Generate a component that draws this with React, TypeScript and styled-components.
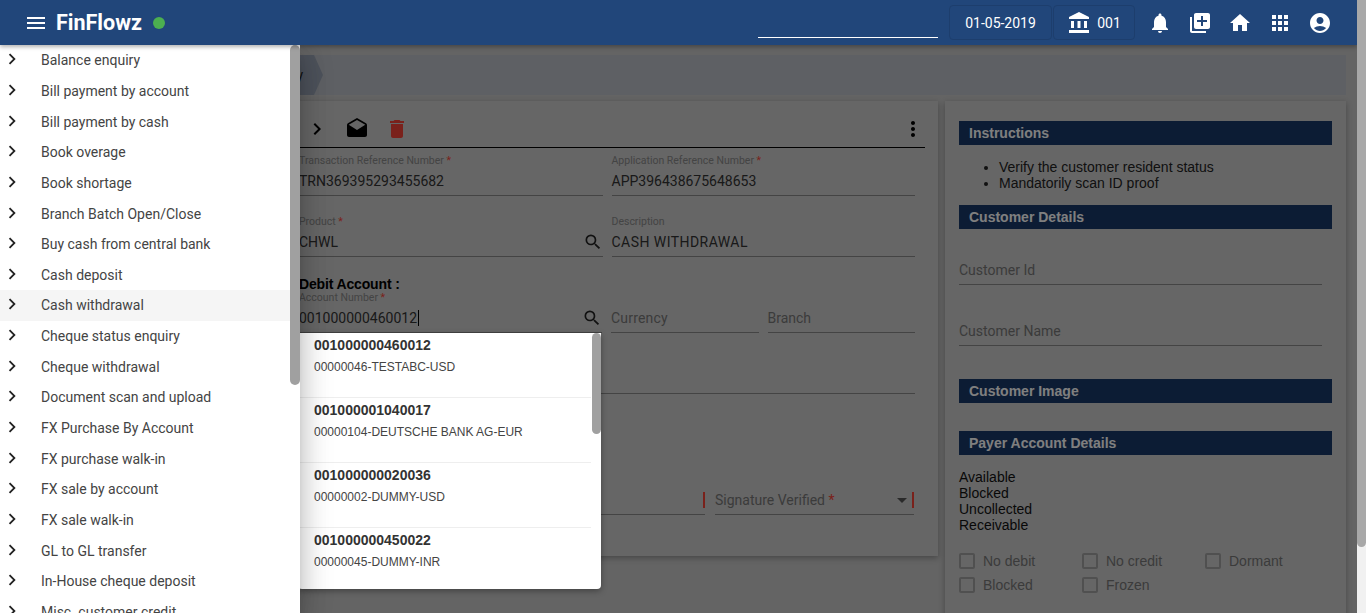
import React from 'react';
import styled, { createGlobalStyle } from 'styled-components';
import {
  MdAccountBalance,
  MdAccountCircle,
  MdApps,
  MdArrowDropDown,
  MdChevronLeft,
  MdChevronRight,
  MdDelete,
  MdDrafts,
  MdHome,
  MdLibraryAdd,
  MdMenu,
  MdMoreVert,
  MdNotifications,
  MdSearch,
} from 'react-icons/md';

const GlobalStyle = createGlobalStyle`
  html, body {
    margin: 0;
    height: 100%;
    overflow: hidden;
    background: #fff;
    font-family: "Liberation Sans", Arial, sans-serif;
  }
  * { box-sizing: border-box; }
`;

const Shell = styled.div`
  display: flex;
  width: 1366px;
  height: 613px;
  overflow: hidden;
`;

const Page = styled.div`
  position: relative;
  width: 1357px;
  height: 613px;
  overflow: hidden;
  background: #c8c8c8;
`;

const ScrollTrack = styled.div`
  width: 9px;
  background: #f1f1f1;
`;

const ScrollThumb = styled.div`
  height: 547px;
  background: #a8a8a8;
  border-radius: 0 0 5px 5px;
`;

const Header = styled.header`
  position: relative;
  z-index: 30;
  display: flex;
  align-items: center;
  height: 45px;
  padding: 0 25px 0 24px;
  background: #21467a;
  color: #fff;
  box-shadow: 0 2px 4px rgba(0, 0, 0, 0.3);
`;

const Logo = styled.span`
  margin-left: 8px;
  font-family: Roboto, Arial, sans-serif;
  font-size: 21.5px;
  font-weight: 700;
`;

const StatusDot = styled.span`
  width: 12px;
  height: 12px;
  margin-left: 11px;
  border-radius: 50%;
  background: #4caf50;
`;

const HeaderSearch = styled.div`
  width: 180px;
  height: 1px;
  margin: 29px 11px 0 auto;
  background: #fff;
`;

const InfoBox = styled.div<{ $width: number }>`
  display: flex;
  align-items: center;
  justify-content: center;
  gap: 6px;
  width: ${(p) => p.$width}px;
  height: 35px;
  margin-right: 1px;
  border: 1px solid #1d3e6d;
  border-radius: 4px;
  font-family: Roboto, Arial, sans-serif;
  font-size: 14px;
  &:first-of-type {
    padding-right: 2px;
  }
`;

const HeaderIcons = styled.div`
  display: flex;
  gap: 16px;
  margin-left: 12px;
`;

const Main = styled.main`
  padding: 10px 11px 0 0;
`;

const Breadcrumb = styled.div`
  height: 40px;
  background: #bcc0c8;
`;

const CrumbTab = styled.div`
  display: flex;
  align-items: center;
  justify-content: flex-end;
  width: 323px;
  height: 40px;
  padding-right: 20px;
  background: #9aa4b6;
  clip-path: polygon(0 0, 314px 0, 323px 50%, 314px 100%, 0 100%);
  font-family: Roboto, Arial, sans-serif;
  font-size: 14px;
  color: #222;
`;

const Columns = styled.div`
  display: grid;
  grid-template-columns: 938px 401px;
  gap: 7px;
  margin-top: 6px;
  align-items: start;
`;

const Card = styled.section`
  background: #ccc;
  box-shadow: 0 2px 6px rgba(0, 0, 0, 0.3);
`;

const FormCard = styled(Card)`
  height: 455px;
  padding: 10px 13px 0 265px;
`;

const Toolbar = styled.div`
  display: flex;
  gap: 16px;
  align-items: center;
  height: 37px;
  border-bottom: 1px solid #000;
`;

const Spacer = styled.div`
  flex: 1;
`;

const Form = styled.div`
  display: flex;
  flex-direction: column;
  width: 616px;
  margin: 6px 0 0 34px;
`;

const Row = styled.div<{ $top?: number; $gap?: number; $inset?: number }>`
  display: flex;
  gap: ${(p) => p.$gap ?? 9}px;
  margin-top: ${(p) => p.$top ?? 0}px;
  padding-right: ${(p) => p.$inset ?? 0}px;
`;

const Field = styled.div<{ $width?: number }>`
  display: flex;
  flex-direction: column;
  justify-content: flex-end;
  flex: ${(p) => (p.$width ? `0 0 ${p.$width}px` : '1')};
  height: 42px;
  padding-top: 1px;
  border-bottom: 1px solid #888;
  position: relative;
`;

const Label = styled.label`
  margin-bottom: auto;
  font-family: Roboto, Arial, sans-serif;
  font-size: 10.5px;
  line-height: 12px;
  color: #888;
`;

const Required = styled.span`
  color: #f44336;
`;

const Value = styled.div<{ $muted?: boolean; $spread?: number }>`
  display: flex;
  align-items: center;
  justify-content: space-between;
  height: 24px;
  padding-bottom: 5px;
  font-family: Roboto, Arial, sans-serif;
  font-size: 14px;
  letter-spacing: ${(p) => p.$spread ?? 0}px;
  color: ${(p) => (p.$muted ? '#777' : '#333')};
`;

const Caret = styled.span`
  width: 1px;
  height: 16px;
  margin-left: 1px;
  background: #000;
`;

const ValueText = styled.span`
  display: flex;
  align-items: center;
`;

const DebitTitle = styled.div`
  margin-top: 20px;
  font-size: 14px;
  font-weight: 700;
  line-height: 14px;
  letter-spacing: -0.15px;
  color: #000;
`;

const RedMark = styled.span`
  position: absolute;
  right: 0;
  bottom: 6px;
  width: 2px;
  height: 16px;
  background: #f44336;
`;

const InfoCard = styled(Card)`
  height: 560px;
  padding: 20px 14px 0;
`;

const SectionBar = styled.h3<{ $top?: number }>`
  height: 24px;
  margin: ${(p) => p.$top ?? 0}px 0 0;
  padding-left: 10px;
  background: #183869;
  color: #fff;
  font-size: 14px;
  font-weight: 700;
  line-height: 24px;
`;

const InstructionList = styled.ul`
  margin: 14px 0;
  padding-left: 40px;
  font-size: 14px;
  line-height: 16px;
  color: #222;
`;

const InfoField = styled.div<{ $top: number }>`
  width: 363px;
  height: 24px;
  margin-top: ${(p) => p.$top}px;
  border-bottom: 1px solid #888;
  font-family: Roboto, Arial, sans-serif;
  font-size: 14px;
  line-height: 18px;
  color: #777;
`;

const BalanceList = styled.div`
  margin-top: 14px;
  font-size: 14px;
  line-height: 16px;
  color: #111;
`;

const CheckGrid = styled.div`
  display: grid;
  grid-template-columns: repeat(3, 123px);
  grid-auto-rows: 24px;
  margin-top: 16px;
`;

const CheckItem = styled.label`
  display: flex;
  align-items: center;
  gap: 8px;
  font-size: 14px;
  color: #777;
`;

const CheckBox = styled.span`
  width: 16px;
  height: 16px;
  border: 2px solid #a0a0a0;
  border-radius: 2px;
`;

const Backdrop = styled.div`
  position: absolute;
  inset: 0;
  z-index: 10;
  background: rgba(0, 0, 0, 0.5);
`;

const Drawer = styled.nav`
  position: absolute;
  top: 45px;
  left: 0;
  bottom: 0;
  z-index: 20;
  width: 300px;
  overflow: hidden;
  background: #fff;
  box-shadow: 0 8px 10px -5px rgba(0, 0, 0, 0.2), 0 16px 24px 2px rgba(0, 0, 0, 0.14),
    0 6px 30px 5px rgba(0, 0, 0, 0.12);
`;

const DrawerItem = styled.div<{ $active?: boolean }>`
  display: flex;
  align-items: center;
  height: 30.65px;
  padding-left: 1px;
  background: ${(p) => (p.$active ? '#f5f5f5' : 'transparent')};
  font-family: Roboto, Arial, sans-serif;
  font-size: 14px;
  color: #444;
  svg {
    flex: none;
    margin-right: 18px;
    color: #222;
    transform: translateY(-1px);
  }
`;

const DrawerThumb = styled.div`
  position: absolute;
  top: 0;
  right: 0;
  width: 10px;
  height: 340px;
  border-radius: 5px;
  background: #a0a0a0;
`;

const Suggestions = styled.div`
  position: absolute;
  top: 333px;
  left: 298px;
  z-index: 15;
  width: 303px;
  height: 256px;
  overflow: hidden;
  padding-right: 10px;
  background: #fff;
  border-radius: 0 0 4px 4px;
  box-shadow: 0 2px 6px rgba(0, 0, 0, 0.35);
`;

const Suggestion = styled.div`
  height: 65px;
  padding-left: 16px;
  border-bottom: 1px solid #eee;
  &:last-of-type {
    border-bottom: none;
  }
`;

const SuggestionNumber = styled.div`
  padding-top: 4px;
  font-size: 14px;
  font-weight: 700;
  line-height: 16px;
  color: #333;
`;

const SuggestionName = styled.div`
  margin-top: 7px;
  font-size: 12px;
  line-height: 14px;
  color: #444;
`;

const SuggestionThumb = styled.div`
  position: absolute;
  top: 0;
  right: 0;
  width: 9px;
  height: 101px;
  border-radius: 5px;
  background: #a0a0a0;
`;

const menuItems = [
  'Balance enquiry',
  'Bill payment by account',
  'Bill payment by cash',
  'Book overage',
  'Book shortage',
  'Branch Batch Open/Close',
  'Buy cash from central bank',
  'Cash deposit',
  'Cash withdrawal',
  'Cheque status enquiry',
  'Cheque withdrawal',
  'Document scan and upload',
  'FX Purchase By Account',
  'FX purchase walk-in',
  'FX sale by account',
  'FX sale walk-in',
  'GL to GL transfer',
  'In-House cheque deposit',
  'Misc. customer credit',
];

const accounts = [
  { number: '001000000460012', name: '00000046-TESTABC-USD' },
  { number: '001000001040017', name: '00000104-DEUTSCHE BANK AG-EUR' },
  { number: '001000000020036', name: '00000002-DUMMY-USD' },
  { number: '001000000450022', name: '00000045-DUMMY-INR' },
];

const checks = ['No debit', 'No credit', 'Dormant', 'Blocked', 'Frozen'];

export default function App() {
  return (
    <Shell>
      <GlobalStyle />
      <Page>
        <Header>
          <MdMenu size={24} />
          <Logo>FinFlowz</Logo>
          <StatusDot />
          <HeaderSearch />
          <InfoBox $width={103}>01-05-2019</InfoBox>
          <InfoBox $width={82}>
            <MdAccountBalance size={24} />
            001
          </InfoBox>
          <HeaderIcons>
            <MdNotifications size={24} />
            <MdLibraryAdd size={24} />
            <MdHome size={24} />
            <MdApps size={24} />
            <MdAccountCircle size={24} />
          </HeaderIcons>
        </Header>

        <Main>
          <Breadcrumb>
            <CrumbTab>y</CrumbTab>
          </Breadcrumb>
          <Columns>
            <FormCard>
              <Toolbar>
                <MdChevronLeft size={24} />
                <MdChevronRight size={24} />
                <MdDrafts size={24} />
                <MdDelete size={24} color="#f44336" />
                <Spacer />
                <MdMoreVert size={24} />
              </Toolbar>
              <Form>
                <Row>
                  <Field>
                    <Label>
                      Transaction Reference Number <Required>*</Required>
                    </Label>
                    <Value>TRN369395293455682</Value>
                  </Field>
                  <Field>
                    <Label>
                      Application Reference Number <Required>*</Required>
                    </Label>
                    <Value>APP396438675648653</Value>
                  </Field>
                </Row>
                <Row $top={19}>
                  <Field>
                    <Label>
                      Product <Required>*</Required>
                    </Label>
                    <Value>
                      CHWL
                      <MdSearch size={20} color="#222" />
                    </Value>
                  </Field>
                  <Field>
                    <Label>Description</Label>
                    <Value $spread={0.45}>CASH WITHDRAWAL</Value>
                  </Field>
                </Row>
                <DebitTitle>Debit Account :</DebitTitle>
                <Row>
                  <Field $width={303}>
                    <Label>
                      Account Number <Required>*</Required>
                    </Label>
                    <Value>
                      <ValueText>
                        001000000460012
                        <Caret />
                      </ValueText>
                      <MdSearch size={20} color="#222" />
                    </Value>
                  </Field>
                  <Field>
                    <Value $muted $spread={0.2}>Currency</Value>
                  </Field>
                  <Field>
                    <Value $muted>Branch</Value>
                  </Field>
                </Row>
                <Row $top={19}>
                  <Field />
                </Row>
                <Row $top={79} $gap={10} $inset={1}>
                  <Field $width={406}>
                    <RedMark />
                  </Field>
                  <Field>
                    <Value $muted>
                      <span>
                        Signature Verified <Required>*</Required>
                      </span>
                      <MdArrowDropDown size={24} color="#555" />
                    </Value>
                    <RedMark />
                  </Field>
                </Row>
              </Form>
            </FormCard>

            <InfoCard>
              <SectionBar>Instructions</SectionBar>
              <InstructionList>
                <li>Verify the customer resident status</li>
                <li>Mandatorily scan ID proof</li>
              </InstructionList>
              <SectionBar>Customer Details</SectionBar>
              <InfoField $top={32}>Customer Id</InfoField>
              <InfoField $top={37}>Customer Name</InfoField>
              <SectionBar $top={33}>Customer Image</SectionBar>
              <SectionBar $top={28}>Payer Account Details</SectionBar>
              <BalanceList>
                <div>Available</div>
                <div>Blocked</div>
                <div>Uncollected</div>
                <div>Receivable</div>
              </BalanceList>
              <CheckGrid>
                {checks.map((check) => (
                  <CheckItem key={check}>
                    <CheckBox />
                    {check}
                  </CheckItem>
                ))}
              </CheckGrid>
              <SectionBar $top={18} />
            </InfoCard>
          </Columns>
        </Main>

        <Backdrop />

        <Suggestions>
          {accounts.map((account) => (
            <Suggestion key={account.number}>
              <SuggestionNumber>{account.number}</SuggestionNumber>
              <SuggestionName>{account.name}</SuggestionName>
            </Suggestion>
          ))}
          <SuggestionThumb />
        </Suggestions>

        <Drawer>
          {menuItems.map((item) => (
            <DrawerItem key={item} $active={item === 'Cash withdrawal'}>
              <MdChevronRight size={22} />
              {item}
            </DrawerItem>
          ))}
          <DrawerThumb />
        </Drawer>
      </Page>
      <ScrollTrack>
        <ScrollThumb />
      </ScrollTrack>
    </Shell>
  );
}
